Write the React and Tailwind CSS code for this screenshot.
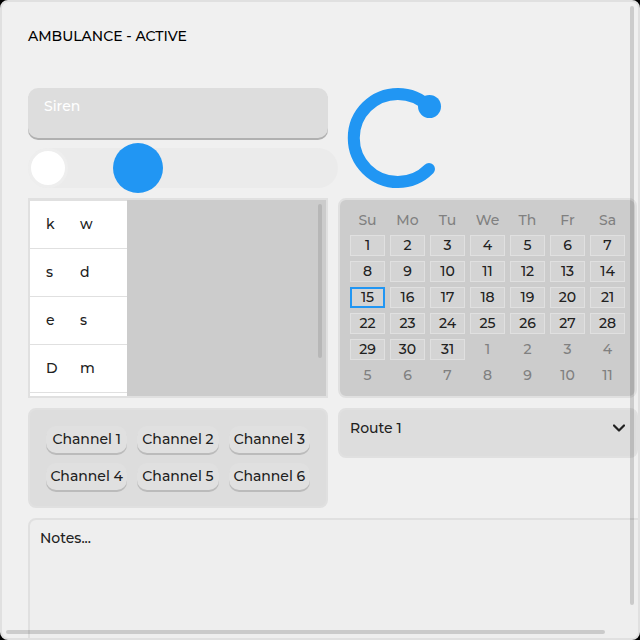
const rows = [["k", "w"], ["s", "d"], ["e", "s"], ["D", "m"], ["", ""]];
const weekDays = ["Su", "Mo", "Tu", "We", "Th", "Fr", "Sa"];
const weeks = Array.from({ length: 6 }, (_, w) =>
  Array.from({ length: 7 }, (_, d) => {
    const n = w * 7 + d + 1;
    return { day: n > 31 ? n - 31 : n, outside: n > 31 };
  })
);
const channels = [1, 2, 3, 4, 5, 6];

function dayClass({ day, outside }) {
  const base = "block h-[21px] w-full border pb-0.5 text-center leading-4";
  if (outside) return `${base} border-transparent text-[#808080]`;
  if (day === 15) return `${base} bg-[#d4d4d4] outline-2 -outline-offset-2 outline-[#2196f3] border-transparent`;
  return `${base} border-[#e0e0e0] bg-[#d4d4d4]`;
}

function LogTable() {
  return (
    <div className="relative h-[200px] overflow-hidden border-2 border-[#e0e0e0] bg-[#cccccc]">
      <table className="w-[97px] table-fixed border-collapse bg-white">
        <tbody>
          {rows.map((row, i) => (
            <tr key={i} className="h-12 border-y border-[#e0e0e0]">
              <td className="w-[34px] pb-0.5 pl-4">{row[0]}</td>
              <td className="pb-0.5 pl-4">{row[1]}</td>
            </tr>
          ))}
        </tbody>
      </table>
      <div className="absolute top-1 right-1 h-[154px] w-1 rounded-full bg-[#b7b7b7]" />
    </div>
  );
}

function Calendar() {
  return (
    <div className="mr-px h-[200px] rounded-lg border-2 border-[#e0e0e0] bg-[#cccccc] px-[5px] pt-1">
      <table className="w-full table-fixed border-separate border-spacing-[5px]">
        <thead>
          <tr>
            {weekDays.map((d) => (
              <th key={d} scope="col" className="h-[21px] p-0 pt-px font-medium text-[#808080]">{d}</th>
            ))}
          </tr>
        </thead>
        <tbody>
          {weeks.map((week, i) => (
            <tr key={i}>
              {week.map((cell, j) => (
                <td key={j} className="h-[21px] p-0">
                  <button type="button" className={dayClass(cell)}>{cell.day}</button>
                </td>
              ))}
            </tr>
          ))}
        </tbody>
      </table>
    </div>
  );
}

export default function App() {
  return (
    <div className="h-screen bg-black font-['Montserrat','Inter',sans-serif] text-sm leading-4 font-medium text-[#212121]">
      <main className="relative h-full overflow-hidden rounded-lg border-2 border-[#e0e0e0] bg-[#f0f0f0] pt-[26px] pl-[26px]">
        <h1 className="h-[60px] leading-4 font-medium text-black">AMBULANCE - ACTIVE</h1>

        <div className="grid grid-cols-2 gap-[10px]">
          <div className="flex h-[100px] flex-col justify-between">
            <button type="button" className="flex h-[50px] items-start rounded-[10px] bg-[#dddddd] px-4 py-[10px] text-left text-white shadow-[0_2px_0_#b0b0b0]">
              Siren
            </button>
            <div className="relative -mr-[10px] h-10 rounded-full bg-[#ebebeb]">
              <label className="block size-10 rounded-full bg-[#eeeeee] p-[3px]">
                <input type="checkbox" role="switch" aria-label="Siren switch" className="block size-[34px] appearance-none rounded-full bg-white" />
              </label>
              <input
                type="range"
                aria-label="Volume"
                defaultValue="0"
                className="absolute -top-[5px] right-0 left-[85px] h-[50px] appearance-none bg-transparent [&::-webkit-slider-thumb]:size-[50px] [&::-webkit-slider-thumb]:appearance-none [&::-webkit-slider-thumb]:rounded-full [&::-webkit-slider-thumb]:bg-[#2196f3]"
              />
            </div>
          </div>
          <svg viewBox="0 0 100 100" className="ml-[10px] size-[100px] overflow-visible" role="img" aria-label="Dial">
            <path d="M81 19A44 44 0 1 0 81 81" fill="none" stroke="#2196f3" strokeWidth="12" strokeLinecap="round" />
            <circle cx="81.5" cy="18.5" r="11.5" fill="#2196f3" />
          </svg>

          <LogTable />
          <Calendar />

          <div className="grid h-[100px] grid-cols-3 content-start gap-[10px] rounded-lg border-2 border-[#e0e0e0] bg-[#dddddd] p-4">
            {channels.map((n) => (
              <button key={n} type="button" className="h-[27px] rounded-[10px] bg-[#e0e0e0] pb-px text-center whitespace-nowrap shadow-[0_2px_0_#bbbbbb]">
                Channel {n}
              </button>
            ))}
          </div>
          <div className="relative h-[50px]">
            <select aria-label="Route" className="h-full w-full appearance-none rounded-lg border-2 border-[#e0e0e0] bg-[#dddddd] px-[10px] pt-2 pb-[18px]">
              <option>Route 1</option>
            </select>
            <svg viewBox="0 0 12 8" className="pointer-events-none absolute top-4 right-[13px] h-2 w-3" aria-hidden="true">
              <path d="M1 1.5L6 6.5L11 1.5" fill="none" stroke="#212121" strokeWidth="2.2" strokeLinecap="round" strokeLinejoin="round" />
            </svg>
          </div>
        </div>

        <textarea
          aria-label="Notes"
          defaultValue="Notes..."
          className="mt-[10px] block h-[200px] w-[calc(100%+16px)] resize-none rounded-lg border-2 border-[#e0e0e0] bg-[#eeeeee] px-[10px] py-[10px]"
        />

        <div className="absolute top-1 right-1 bottom-[33px] w-1 rounded-full bg-black/15" />
        <div className="absolute right-[33px] bottom-1 left-1 h-1 rounded-full bg-black/15" />
      </main>
    </div>
  );
}
